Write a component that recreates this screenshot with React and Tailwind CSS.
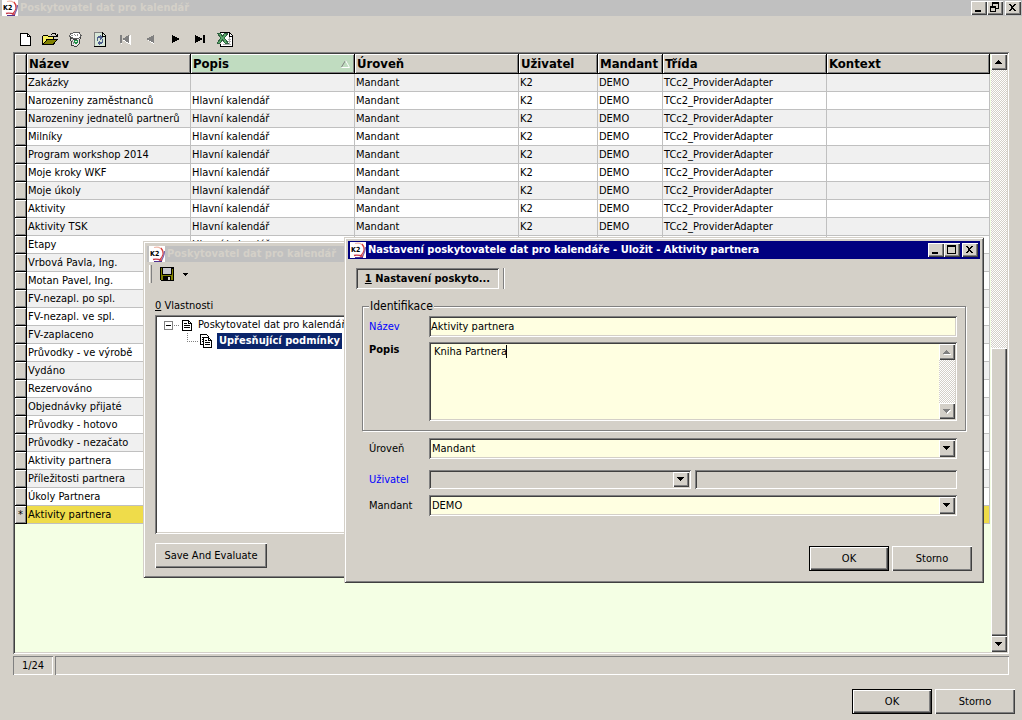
import React from 'react';

const raised =
  'bg-[#d4d0c8] shadow-[inset_1px_1px_0_#ffffff,inset_-1px_-1px_0_#404040,inset_-2px_-2px_0_#808080]';
const windowFrame =
  'bg-[#d4d0c8] shadow-[inset_1px_1px_0_#d4d0c8,inset_-1px_-1px_0_#404040,inset_2px_2px_0_#ffffff,inset_-2px_-2px_0_#808080]';
const sunken =
  'shadow-[inset_1px_1px_0_#808080,inset_-1px_-1px_0_#ffffff,inset_2px_2px_0_#404040,inset_-2px_-2px_0_#d4d0c8]';
const sunkenThin =
  'shadow-[inset_1px_1px_0_#808080,inset_-1px_-1px_0_#ffffff]';
const track =
  'bg-[repeating-conic-gradient(#ffffff_0%_25%,#d4d0c8_0%_50%)] bg-[length:2px_2px]';

const columns = [
  { key: 'nazev', label: 'Název', width: 'w-[164px]' },
  { key: 'popis', label: 'Popis', width: 'w-[164px]', sorted: true },
  { key: 'uroven', label: 'Úroveň', width: 'w-[164px]' },
  { key: 'uzivatel', label: 'Uživatel', width: 'w-[79px]' },
  { key: 'mandant', label: 'Mandant', width: 'w-[65px]' },
  { key: 'trida', label: 'Třída', width: 'w-[164px]' },
  { key: 'kontext', label: 'Kontext', width: '' },
];

const common = { uroven: 'Mandant', uzivatel: 'K2', mandant: 'DEMO', trida: 'TCc2_ProviderAdapter' };
const calendar = { popis: 'Hlavní kalendář', ...common };

const rows = [
  { nazev: 'Zakázky', ...common },
  { nazev: 'Narozeniny zaměstnanců', ...calendar },
  { nazev: 'Narozeniny jednatelů partnerů', ...calendar },
  { nazev: 'Milníky', ...calendar },
  { nazev: 'Program workshop 2014', ...calendar },
  { nazev: 'Moje kroky WKF', ...calendar },
  { nazev: 'Moje úkoly', ...calendar },
  { nazev: 'Aktivity', ...calendar },
  { nazev: 'Aktivity TSK', ...calendar },
  { nazev: 'Etapy', popis: 'Hlavní kalendář' },
  { nazev: 'Vrbová Pavla, Ing.' },
  { nazev: 'Motan Pavel, Ing.' },
  { nazev: 'FV-nezapl. po spl.' },
  { nazev: 'FV-nezapl. ve spl.' },
  { nazev: 'FV-zaplaceno' },
  { nazev: 'Průvodky - ve výrobě' },
  { nazev: 'Vydáno' },
  { nazev: 'Rezervováno' },
  { nazev: 'Objednávky přijaté' },
  { nazev: 'Průvodky - hotovo' },
  { nazev: 'Průvodky - nezačato' },
  { nazev: 'Aktivity partnera' },
  { nazev: 'Příležitosti partnera' },
  { nazev: 'Úkoly Partnera' },
  { nazev: 'Aktivity partnera', isNew: true },
];

const Logo = () => (
  <svg width="16" height="16" viewBox="0 0 16 16" className="shrink-0" aria-hidden="true">
    <rect width="16" height="16" fill="#ffffff" />
    <path d="M5 1.5 C10 0 15 3 14.5 9" fill="none" stroke="#f0b8a8" strokeWidth="1.2" />
    <path d="M12 2 C15.500 6 14.5 11 10 14.5" fill="none" stroke="#d84040" strokeWidth="1.2" />
    <path d="M15.500 5 C15.5 10 13 13.5 12 15.5" fill="none" stroke="#7868b0" strokeWidth="1.2" />
    <path d="M4 13.5 C7 12.500 9 13 13 14.5" fill="none" stroke="#c83848" strokeWidth="1.4" />
    <path d="M5 15.5 H13" stroke="#503090" />
    <text x="1" y="10" fontSize="7" fontWeight="bold" fill="#000000">K2</text>
  </svg>
);

const Triangle = ({ direction = 'down', disabled }) => (
  <svg width="8" height="5" viewBox="0 0 8 5" shapeRendering="crispEdges" aria-hidden="true">
    {disabled && <path d={direction === 'up' ? 'M1 5 L4.500 1 L8 5 Z' : 'M1 1 H8 L4.500 5 Z'} fill="#ffffff" />}
    <path d={direction === 'up' ? 'M0 4 L3.500 0 L7 4 Z' : 'M0 0 H7 L3.500 4 Z'} fill={disabled ? '#808080' : '#000000'} />
  </svg>
);

const icons = {
  new: (
    <>
      <path d="M3 2 H10 L14 6 V15 H3 Z" fill="#ffffff" stroke="none" />
      <path d="M3.500 15 V2.500 H10.500 L13.500 5.500 V14.500 H3.500 M10.500 2.500 V5.500 H13.500" fill="none" stroke="#000000" />
    </>
  ),
  open: (
    <>
      <path d="M1 14 V5 H2 L3 4 H6 L7 5 H12 V8 H6 L2 14 Z" fill="#f8f060" stroke="none" />
      <path d="M0.500 13 V5.500 L2 4.500 H5.500 L6.500 5.500 H11.500 V8" fill="none" stroke="#000000" />
      <path d="M1 13.500 L5 8.500 H15.500 L11 13.500 Z" fill="#808000" stroke="#000000" />
      <path d="M9 3.500 L10.500 2.500 H13 L14.500 5 M12 5.500 H15 V2.500" fill="none" stroke="#000000" />
    </>
  ),
  bin: (
    <>
      <path d="M3 6 L5 14.500 L9 15.500 L12 13.500 L13.500 6 L10 8 H6 Z" fill="#e8e8e8" stroke="#404040" />
      <path d="M2.500 5 L4 2.500 L8 1.500 L12 1.500 L14 4.500 L12 7 L7 8 Z" fill="#ffffff" stroke="#606060" />
      <path d="M4 4 L6 5 M7 3 L9 5 M10 3 L11 5 M5.500 9 L6.500 13" stroke="#909090" fill="none" />
      <path d="M8 9 L10 9 L11 11 L9 12.500 L7.500 11 Z" stroke="#209048" fill="none" />
    </>
  ),
  refresh: (
    <>
      <path d="M2 1 H10 L14 5 V16 H2 Z" fill="#d8e8d8" stroke="none" />
      <path d="M2.500 15.500 V1.500 H10.500" fill="none" stroke="#808080" />
      <path d="M10.500 1.500 V5.500 H14 M10.500 1.500 L13.500 4.500 V15.500 H2" fill="none" stroke="#000000" />
      <path d="M5 10 H6 V7 H8 V9 L11 6 L8 4 V5 H6 L5 7 Z" fill="#506090" />
      <path d="M11 8 H10 V11 H8 V9 L5 12 L8 14 V13 H10 L11 11 Z" fill="#506090" />
    </>
  ),
  first: (
    <>
      <path d="M4 5 V13 M13 5 V13 L6 9 Z" fill="#ffffff" stroke="#ffffff" />
      <path d="M3 4 H5 V12 H3 Z M12 4 V12 L5 8 Z" fill="#808080" stroke="none" />
    </>
  ),
  prev: (
    <>
      <path d="M12 5 V13 L5 9 Z" fill="#ffffff" stroke="none" />
      <path d="M12 4 V12 L4 8 Z" fill="#808080" stroke="none" />
    </>
  ),
  next: <path d="M5 4 L13 8 L5 12 Z" fill="#000000" stroke="none" />,
  last: <path d="M3 4 L11 8 L3 12 Z M11 4 H13 V12 H11 Z" fill="#000000" stroke="none" />,
  excel: (
    <>
      <path d="M4 1 H12 L16 5 V16 H4 Z" fill="#ffffff" stroke="none" />
      <path d="M3 1.500 H12.500 L15.500 4.500 V15.500 H3.500 V13 M12.500 1.500 V5 H15" fill="none" stroke="#000000" />
      <path d="M12.500 6 V13 M6 13.500 H14 M11 8.500 H14 M11 10.500 H14" stroke="#b0b0b0" fill="none" />
      <path d="M0 2 H3 L5.500 5 L8 2 H11 L7.500 7 L11 12 H8 L5.500 9 L3 12 H0 L4 7 Z" fill="#58a868" stroke="#306040" />
    </>
  ),
};

const toolbar = [
  ['new', 'Nový'],
  ['open', 'Otevřít'],
  ['bin', 'Smazat'],
  ['refresh', 'Obnovit'],
  ['first', 'První', true],
  ['prev', 'Předchozí', true],
  ['next', 'Další'],
  ['last', 'Poslední'],
  ['excel', 'Export do Excelu'],
];

const captionPaths = {
  minimize: <path d="M4 9 H10 V11 H4 Z" />,
  maximize: <path d="M3 2 H12 V11 H3 Z M4 4 V10 H11 V4 Z" fillRule="evenodd" />,
  restore: <path d="M5 1 H12 V8 H9 V11 H3 V5 H5 Z M6 3 V5 H9 V7 H11 V3 Z M4 7 V10 H8 V7 Z" fillRule="evenodd" />,
  close: <path d="M4 3 H6 L7.500 5 L9 3 H11 L8.500 6.500 L11 10 H9 L7.500 8 L6 10 H4 L6.500 6.500 Z" />,
};

const CaptionButton = ({ kind, label }) => (
  <button aria-label={label} className={`w-4 h-[14px] ${raised}`}>
    <svg width="16" height="14" viewBox="0 0 16 14" shapeRendering="crispEdges" aria-hidden="true">
      {captionPaths[kind]}
    </svg>
  </button>
);

const CaptionButtons = ({ middle, middleLabel }) => (
  <div className="flex ml-auto">
    <CaptionButton kind="minimize" label="Minimalizovat" />
    <CaptionButton kind={middle} label={middleLabel} />
    <div className="w-0.5" />
    <CaptionButton kind="close" label="Zavřít" />
  </div>
);

const PushButton = ({ primary, children }) => (
  <button
    className={`w-20 h-[25px] pt-px ${primary ? 'border border-black' : ''} ${raised}`}
  >
    {children}
  </button>
);

const ScrollButton = ({ direction, disabled, label }) => (
  <button
    aria-label={label}
    disabled={disabled}
    className={`flex items-center justify-center w-4 h-4 shrink-0 ${raised}`}
  >
    <Triangle direction={direction} disabled={disabled} />
  </button>
);

const DropDown = ({ id, value, disabled, className }) => (
  <div className={`relative ${className}`}>
    <select
      id={id}
      disabled={disabled}
      defaultValue={value}
      className={`block w-full appearance-none px-[3px] text-black opacity-100 outline-none ${disabled ? 'h-[19px] bg-[#d4d0c8]' : 'h-[21px] bg-[#ffffe1]'} ${sunken}`}
    >
      <option>{value}</option>
    </select>
    <span className={`absolute right-0.5 top-0.5 bottom-0.5 w-4 flex items-center justify-center pointer-events-none ${raised}`}>
      <Triangle />
    </span>
  </div>
);

const ProviderTable = () => (
  <table className="w-full table-fixed border-separate border-spacing-0">
    <thead>
      <tr className="h-5">
        <th className="w-3 p-0 border-r border-b border-black bg-[#d4d0c8] shadow-[inset_1px_1px_0_#ffffff,inset_-1px_-1px_0_#808080]" />
        {columns.map((col) => (
          <th
            key={col.key}
            className={`p-0 pl-0.5 border-r border-b border-black text-left text-[13px] leading-[19px] whitespace-nowrap shadow-[inset_1px_1px_0_#ffffff,inset_-1px_-1px_0_#808080] ${col.width} ${col.sorted ? 'bg-[#c0dcc0]' : 'bg-[#d4d0c8]'}`}
          >
            <div className="flex items-center justify-between pr-1">
              {col.label}
              {col.sorted && (
                <svg width="9" height="8" viewBox="0 0 9 8" aria-hidden="true">
                  <path d="M0.500 7 L4.500 0.500" stroke="#808080" fill="none" />
                  <path d="M4.500 0.500 L8.500 7.500 H0.500" stroke="#ffffff" fill="none" />
                </svg>
              )}
            </div>
          </th>
        ))}
      </tr>
    </thead>
    <tbody>
      {rows.map((row, i) => (
        <tr
          key={i}
          className={`h-[18px] ${row.isNew ? 'bg-[#efdc4a]' : i % 2 === 0 ? 'bg-[#f0f0f0]' : 'bg-white'}`}
        >
          <td className="p-0 pt-px text-center leading-4 border-r border-b border-black bg-[#d4d0c8] shadow-[inset_1px_1px_0_#ffffff,inset_-1px_-1px_0_#808080]">
            {row.isNew && '*'}
          </td>
          {columns.map((col) => (
            <td
              key={col.key}
              className="p-0 pl-px pt-px border-r border-b border-[#c0c0c0] leading-4 whitespace-nowrap"
            >
              {row[col.key]}
            </td>
          ))}
        </tr>
      ))}
    </tbody>
  </table>
);

const TreeWindow = () => (
  <section className={`absolute left-[143px] top-[241px] w-[420px] px-1 pt-[5px] pb-[10px] ${windowFrame}`}>
    <header className="flex items-center h-4 pl-0.5 bg-[#c0c0c0]">
      <Logo />
      <h2 className="pl-0.5 font-bold text-[#d4d0c8]">Poskytovatel dat pro kalendář</h2>
    </header>
    <div className="flex items-center h-6 pl-0.5">
      <div className="w-[3px] h-[18px] mr-[7px] shadow-[inset_-1px_0_0_#808080,inset_1px_0_0_#ffffff]" />
      <button aria-label="Uložit">
        <svg width="16" height="16" viewBox="0 0 16 16" shapeRendering="crispEdges" aria-hidden="true">
          <path d="M1 1 H15 V15 H2 L1 14 Z" />
          <path d="M2 2 H3 V9 H13 V3 H14 V14 H12 V10 H4 V14 H2 Z" fill="#808000" />
          <path d="M4 2 H12 V8 H4 Z" fill="#c8c8d0" />
          <path d="M9 11 H11 V14 H9 Z" fill="#d4d0c8" />
        </svg>
      </button>
      <button aria-label="Možnosti uložení" className="pl-2">
        <svg width="5" height="3" viewBox="0 0 5 3" shapeRendering="crispEdges" aria-hidden="true">
          <path d="M0 0 H5 L2.500 3 Z" />
        </svg>
      </button>
    </div>
    <div className="px-2 pt-3">
      <p className="leading-4"><u>0</u> Vlastnosti</p>
      <div className={`mt-px h-[219px] bg-white p-0.5 ${sunken}`}>
        <div className="flex items-center h-4 pl-[7px]">
          <svg width="16" height="16" viewBox="0 0 16 16" shapeRendering="crispEdges" aria-hidden="true">
            <path d="M0.500 4.500 H8.500 V12.500 H0.500 Z" fill="#ffffff" stroke="#808080" />
            <path d="M2 8.500 H7" stroke="#000000" />
            <path d="M10 8.500 H15" stroke="#808080" strokeDasharray="1 1" />
          </svg>
          <svg width="12" height="16" viewBox="0 0 12 16" className="ml-px" shapeRendering="crispEdges" aria-hidden="true">
            <path d="M1.500 3.500 H7.500 L10.500 6.500 V13.500 H1.500 Z M7.500 3.500 V6.500 H10.500 M3 6.500 H6 M3 8.500 H9 M3 10.500 H9" fill="#ffffff" stroke="#000000" />
          </svg>
          <span className="pl-[5px] whitespace-nowrap">Poskytovatel dat pro kalendář</span>
        </div>
        <div className="flex items-center h-4 pl-[30px]">
          <svg width="12" height="16" viewBox="0 0 12 16" shapeRendering="crispEdges" aria-hidden="true">
            <path d="M0.500 0 V8.500 H12" fill="none" stroke="#808080" strokeDasharray="1 1" />
          </svg>
          <svg width="14" height="16" viewBox="0 0 14 16" shapeRendering="crispEdges" aria-hidden="true">
            <path d="M1.500 1.500 H7.500 L9.500 3.500 V11.500 H1.500 Z M3 4.500 H5 M3 6.500 H5 M3 8.500 H5" fill="#ffffff" stroke="#000000" />
            <path d="M4.500 4.500 H9.500 L12.500 7.500 V14.500 H4.500 Z M9.500 4.500 V7.500 H12.500 M6 7.500 H8 M6 9.500 H11 M6 11.500 H11" fill="#ffffff" stroke="#000000" />
          </svg>
          <span className="ml-1 px-0.5 leading-4 font-bold text-white bg-[#0a246a] whitespace-nowrap">
            Upřesňující podmínky
          </span>
        </div>
      </div>
      <button className={`mt-[9px] w-28 h-[25px] whitespace-nowrap ${raised}`}>Save And Evaluate</button>
    </div>
  </section>
);

const SettingsWindow = () => (
  <section className={`absolute left-[344px] top-[237px] w-[640px] p-1 pb-3 ${windowFrame}`}>
    <header className="flex items-center h-[18px] px-0.5 bg-[#000080]">
      <Logo />
      <h2 className="pl-0.5 font-bold text-white">
        Nastavení poskytovatele dat pro kalendáře - Uložit - Aktivity partnera
      </h2>
      <CaptionButtons middle="maximize" middleLabel="Maximalizovat" />
    </header>
    <form className="px-2" onSubmit={(e) => e.preventDefault()}>
      <div className="flex items-stretch gap-1 pt-[9px]">
        <button type="button" className={`w-[143px] h-[21px] font-bold ${sunken}`}>
          <u>1</u> Nastavení poskyto...
        </button>
        <div className="w-0.5 border-l border-r border-l-[#808080] border-r-white" />
      </div>
      <fieldset className="mx-1.5 mt-[9px] pl-1.5 pr-2 pb-[9px] border border-[#808080] shadow-[1px_1px_0_#ffffff,inset_1px_1px_0_#ffffff]">
        <legend className="px-px text-[12px] leading-4 bg-[#d4d0c8]">Identifikace</legend>
        <div className="flex items-start pt-0.5">
          <label htmlFor="nazev" className="w-[60px] shrink-0 leading-[22px] text-[#0000ff]">Název</label>
          <input
            id="nazev"
            defaultValue="Aktivity partnera"
            className={`flex-1 h-[21px] px-0.5 bg-[#ffffe1] outline-none ${sunken}`}
          />
        </div>
        <div className="flex items-start pt-1">
          <label htmlFor="popis" className="w-[60px] shrink-0 leading-4 font-bold">Popis</label>
          <div className={`relative flex flex-1 p-0.5 bg-[#ffffe1] ${sunken}`}>
            <textarea
              id="popis"
              defaultValue="Kniha Partnera"
              className="block flex-1 h-[75px] resize-none overflow-hidden pl-[3px] leading-4 outline-none"
            />
            <span className="absolute left-[77px] top-[3px] w-px h-[13px] bg-black" />
            <div className={`flex flex-col justify-between ${track}`}>
              <ScrollButton direction="up" disabled label="Nahoru" />
              <ScrollButton direction="down" disabled label="Dolů" />
            </div>
          </div>
        </div>
      </fieldset>
      <div className="pt-[7px] pl-[13px] pr-[15px]">
        <div className="flex items-start pb-[10px]">
          <label htmlFor="uroven" className="w-[60px] leading-[22px]">Úroveň</label>
          <DropDown id="uroven" value="Mandant" className="flex-1" />
        </div>
        <div className="flex items-center pb-1.5">
          <label htmlFor="uzivatel" className="w-[60px] leading-[19px] text-[#0000ff]">Uživatel</label>
          <DropDown id="uzivatel" value="" disabled className="flex-1" />
          <input
            aria-label="Jméno uživatele"
            disabled
            className={`ml-1 flex-1 min-w-0 h-[19px] bg-[#d4d0c8] ${sunken}`}
          />
        </div>
        <div className="flex items-start">
          <label htmlFor="mandant" className="w-[60px] leading-[22px]">Mandant</label>
          <DropDown id="mandant" value="DEMO" className="flex-1" />
        </div>
      </div>
      <div className="flex justify-end gap-[3px] pt-[29px]">
        <PushButton primary>OK</PushButton>
        <PushButton>Storno</PushButton>
      </div>
    </form>
  </section>
);

export default function App() {
  return (
    <div className="relative min-h-screen flex flex-col bg-[#d4d0c8] text-black text-[11px] leading-4 font-['DejaVu_Sans_Condensed','DejaVu_Sans',sans-serif]">
      <header className="flex items-center h-4 pl-0.5 pr-px bg-[#c0c0c0]">
        <Logo />
        <h1 className="pl-0.5 font-bold text-[#d4d0c8]">Poskytovatel dat pro kalendář</h1>
        <CaptionButtons middle="restore" middleLabel="Obnovit okno" />
      </header>

      <main className="flex-1 flex flex-col px-[13px] pt-[11px]">
        <div className="flex h-[23px] mb-0.5 -ml-px">
          {toolbar.map(([icon, label, disabled]) => (
            <button
              key={icon}
              aria-label={label}
              disabled={disabled}
              className="w-[25px] h-[23px] flex items-center justify-center"
            >
              <svg width="16" height="16" viewBox="0 0 16 16" shapeRendering="crispEdges" aria-hidden="true">
                {icons[icon]}
              </svg>
            </button>
          ))}
        </div>

        <div className={`flex-1 flex p-0.5 bg-[#f4ffe4] ${sunken}`}>
          <div className="flex-1 pr-px">
            <ProviderTable />
          </div>
          <div className={`w-4 flex flex-col ${track}`}>
            <ScrollButton direction="up" label="Posunout nahoru" />
            <div className="flex-[278]" />
            <div className={`flex-[289] ${raised}`} />
            <ScrollButton direction="down" label="Posunout dolů" />
          </div>
        </div>

        <div className="flex gap-0.5 pt-0.5 h-[21px]">
          <div className={`w-10 text-center leading-5 ${sunkenThin}`}>1/24</div>
          <div className={`flex-1 ${sunkenThin}`} />
        </div>
      </main>

      <footer className="flex justify-end gap-[3px] pr-[7px] pt-[14px] pb-[6px]">
        <PushButton primary>OK</PushButton>
        <PushButton>Storno</PushButton>
      </footer>

      <TreeWindow />
      <SettingsWindow />
    </div>
  );
}
